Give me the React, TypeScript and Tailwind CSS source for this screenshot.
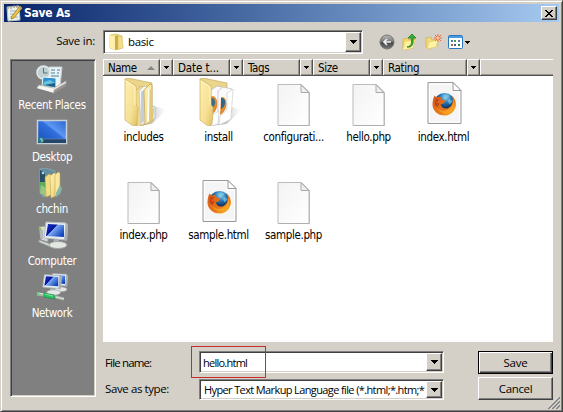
import React from 'react';

const UI = "font-['DejaVu_Sans_Condensed','DejaVu_Sans',sans-serif] [font-stretch:condensed]";
const OPEN = "font-['Open_Sans','Noto_Sans',sans-serif] [font-stretch:normal] text-[11.5px]";
const SUNKEN = 'border border-t-[#808080] border-l-[#808080] border-r-white border-b-white shadow-[inset_1px_1px_0_#404040,inset_-1px_-1px_0_#d4d0c8]';
const RAISED = 'bg-[#d4d0c8] border border-t-white border-l-white border-r-[#404040] border-b-[#404040] shadow-[inset_-1px_-1px_0_#808080]';

function Label({ children, className = '' }: { children: string; className?: string }) {
  return <span className={`whitespace-nowrap ${className}`}>{children}</span>;
}

function Arrow({ small = false }: { small?: boolean }) {
  return small ? (
    <svg width="5" height="3" viewBox="0 0 5 3" shapeRendering="crispEdges"><path d="M0 0h5v1H0zM1 1h3v1H1zM2 2h1v1H2z" /></svg>
  ) : (
    <svg width="7" height="4" viewBox="0 0 7 4" shapeRendering="crispEdges"><path d="M0 0h7v1H0zM1 1h5v1H1zM2 2h3v1H2zM3 3h1v1H3z" /></svg>
  );
}

function DropButton() {
  return <div className={`flex w-4 shrink-0 items-center justify-center ${RAISED}`}><Arrow /></div>;
}

function Defs() {
  return (
    <svg width="0" height="0" className="absolute">
      <defs>
        <linearGradient id="folder" x1="0" x2="1" y2="1"><stop stopColor="#fff0ae" /><stop offset=".6" stopColor="#f6e095" /><stop offset="1" stopColor="#dfc05e" /></linearGradient>
        <linearGradient id="paper" x1="0" y1="0" x2="1" y2="1"><stop stopColor="#f3f3f3" /><stop offset="1" stopColor="#fff" /></linearGradient>
        <linearGradient id="shade"><stop stopColor="#666" stopOpacity=".6" /><stop offset=".5" stopColor="#777" stopOpacity=".4" /><stop offset="1" stopColor="#999" stopOpacity="0" /></linearGradient>
        <linearGradient id="screen" x1="0" y1="0" x2="1" y2=".7"><stop stopColor="#1838b5" /><stop offset=".44" stopColor="#0712a1" /><stop offset=".46" stopColor="#7eacf0" /><stop offset="1" stopColor="#1245c0" /></linearGradient>
        <linearGradient id="desktop" x1="0" y1="1" x2="1" y2="0"><stop stopColor="#174cb0" /><stop offset=".55" stopColor="#3170de" /><stop offset=".6" stopColor="#5d98f2" /><stop offset="1" stopColor="#2d63d0" /></linearGradient>
        <radialGradient id="globe" cx=".55" cy=".2"><stop stopColor="#9bddf4" /><stop offset=".5" stopColor="#2b7dba" /><stop offset="1" stopColor="#123669" /></radialGradient>
        <linearGradient id="fox" x1="0" y1="0" x2="1" y2="1"><stop stopColor="#d45a1c" /><stop offset=".6" stopColor="#e87716" /><stop offset="1" stopColor="#ffc32f" /></linearGradient>
        <linearGradient id="ball" x2="0" y2="1"><stop stopColor="#bbb" /><stop offset=".48" stopColor="#777" /><stop offset=".52" stopColor="#444" /><stop offset="1" stopColor="#777" /></linearGradient>
      </defs>
    </svg>
  );
}

function FoxBall() {
  return (
    <g>
      <circle cx="12" cy="11" r="10.5" fill="url(#globe)" />
      <path d="M13 2l4 1-2 3-3-1zM17 6l3 3-3 3-2-4z" fill="#76c2e4" opacity=".75" />
      <path d="M2 3l2 2 4-1 1 3 4 1-2 3-3 1 2 3c3 2 6 1 8-1 3-3 3-8 1-11 4 3 6 9 3 14-2 4-6 6-10 6C5 23 0 18 0 12c0-4 1-7 2-9z" fill="url(#fox)" />
      <path d="M3 13c2 5 8 7 13 4 4-2 5-6 4-10 3 4 2 9-1 12-5 4-13 2-16-6z" fill="#f7ac27" opacity=".65" />
      <path d="M3 6l4 1-3 3 3 1-2 4-3-3z" fill="#bd3c17" opacity=".8" />
    </g>
  );
}

function PageIcon({ fox = false }: { fox?: boolean }) {
  return (
    <svg width="48" height="48" viewBox="0 0 48 48">
      {fox ? (
        <>
          <path d="M8 4.5h25l8 8v33H8z" fill="#f5f5f6" stroke="#999" />
          <path d="M9.5 6h22v8h8v30h-30z" fill="none" stroke="#fff" />
          <path d="M33 4.5v8h8z" fill="#fff" stroke="#999" />
          <g transform="translate(12.5 14.5)"><FoxBall /></g>
        </>
      ) : (
        <>
          <path d="M8 6.5h23l8 8v33H8z" fill="url(#paper)" stroke="#bbb" />
          <path d="M31 6.5v8h8z" fill="#eee" stroke="#aaa" />
          <path d="M31.5 7l8 8v32.5H9" fill="none" stroke="#aaa" opacity=".7" />
        </>
      )}
    </svg>
  );
}

function FolderIcon({ fox = false }: { fox?: boolean }) {
  return (
    <svg width="48" height="48" viewBox="0 0 48 48">
      <path d="M14 48l18-2 14-14-12-4z" fill="url(#shade)" />
      <path d="M5 1l3-1 24 5v24l-16 3z" fill="#ead58a" stroke="#b9a458" strokeWidth=".6" />
      {fox ? (
        <>
          <path d="M16 12l6-4 5 1-3 34-8 4z" fill="#fafafa" stroke="#b9b9b9" strokeWidth=".7" />
          <path d="M16 18c8-1 9 14 0 19z" fill="#e08a32" /><path d="M16 20c5-1 6 8 0 11z" fill="#3d6d88" />
          <path d="M23 13l5-4 9 2-3 32-11 4z" fill="#fafafa" stroke="#bbb" strokeWidth=".7" />
          <path d="M26 19c7-1 8 13-1 18z" fill="#e08a32" /><path d="M26 20c5-1 6 8 0 11z" fill="#2e668d" />
          <path d="M16 48l2-11 6-4-1 13zM24 47l1-9 7-6V15l6-4-2 30z" fill="#fff" stroke="#c7c7c7" strokeWidth=".6" />
        </>
      ) : (
        <>
          <path d="M15 13l6-5 2 1v20l2 2-1 16-7 2z" fill="#efda8e" stroke="#c2a85a" strokeWidth=".7" />
          <path d="M19 13l5-5 3 1v35l-6 3z" fill="#f3f5f6" stroke="#bbb" strokeWidth=".6" />
          <path d="M21 14l3-2v32l-3 1z" fill="#c4ced6" />
          <path d="M24 12l6-6 2 1v22l2 2-1 12-8 4z" fill="url(#folder)" stroke="#b99e4f" strokeWidth=".7" />
          <path d="M28 11l1-1v33l-2 1z" fill="#fcfcf6" />
          <path d="M31 31l2-3 2 1v11l-4 3z" fill="#edf3f6" stroke="#a4b2b8" strokeWidth=".7" />
          <path d="M30 12h2v17l2 2-1 11-4 2z" fill="#e2c979" />
        </>
      )}
      <path d="M5 1l11 7v19l2 2-1 17-4 2-8-6z" fill="url(#folder)" stroke="#d3b969" strokeWidth=".8" />
      <path d="M6 3l9 6v18" fill="none" stroke="#fff7cb" />
    </svg>
  );
}

function FileItem({ name, kind }: { name: string; kind: string }) {
  return (
    <div className="flex h-[98px] w-[75px] flex-col items-center">
      {kind.startsWith('folder') ? <FolderIcon fox={kind === 'folder-fox'} /> : <PageIcon fox={kind === 'fox'} />}
      <Label className="mt-[3px] leading-4">{name}</Label>
    </div>
  );
}

function Monitor() {
  return (
    <>
      <path d="M7 1l20 1v17L5 17z" fill="#e8edf0" stroke="#b4bdc1" />
      <path d="M9 3l16 1v12L7 15z" fill="url(#screen)" />
      <path d="M27 2l3 2-2 16-3-1z" fill="#a8b0b5" />
      <path d="M15 18l5 1v4h-6z" fill="#a9b0b2" />
      <ellipse cx="19" cy="24" rx="9" ry="3.5" fill="#e5e7e3" stroke="#9fa6a8" />
    </>
  );
}

function PlaceIcon({ kind }: { kind: string }) {
  return (
    <svg width="32" height="32" viewBox="0 0 32 32">
      {kind === 'recent' && <>
        <path d="M13 3h13l-2 20H12z" fill="#edf3f5" stroke="#c2ced1" />
        <path d="M15 6h4m2 0h3m-9 3h4m2 0h2m-8 3h8" stroke="#79a5ba" strokeWidth="1.5" />
        <circle cx="7.5" cy="8.5" r="6.5" fill="#bfd0d3" stroke="#e2eaea" strokeWidth="1.5" />
        <path d="M7.5 4v5h4" stroke="#5c7176" fill="none" />
        <path d="M7 13l13 1v10L6 22z" fill="#2e8fd0" stroke="#ecf6f7" /><path d="M8 18l6-2 5 3v4l-12-1z" fill="#66c3dd" /><path d="M8 21l11-2v4z" fill="#235c83" />
        <path d="M1 24l16 4 13-8v-3l-12 7L3 21z" fill="#e6e6e2" stroke="#b3b1ac" strokeWidth=".7" /><path d="M1 24l2-2 15 3v4z" fill="#f7f7f1" /><path d="M18 26l12-7v3l-13 8z" fill="#9c938e" />
      </>}
      {kind === 'desktop' && <>
        <path d="M1.5 4.5h29v23h-29z" fill="url(#desktop)" stroke="#c5d0d8" strokeWidth="1.5" />
        <path d="M2 23h28v4H2z" fill="#244569" /><path d="M2 23h28" stroke="#6c8fb9" strokeWidth=".6" /><circle cx="5" cy="24" r="3" fill="#257d91" /><path d="M4 23h2v3" stroke="#b9e5b1" fill="none" />
      </>}
      {kind === 'user' && <>
        <path d="M4 1l6-1 9 3v24l-12 2-3-4z" fill="#668d9d" stroke="#91aeb6" strokeWidth=".7" /><path d="M4 2l5 3v20l-5-4z" fill="#284f67" /><path d="M4 14h6v13l-6-4z" fill="#5bae5e" />
        <path d="M9 9l4-3 2 1v20l-5 2z" fill="#f3dc81" stroke="#b29543" strokeWidth=".5" /><path d="M14 8l4-3 2 1v22l-5 2z" fill="url(#folder)" stroke="#c5a95a" strokeWidth=".5" /><path d="M19 7l3-3 2 1v20l-5 3z" fill="#f8e79f" stroke="#b99f4a" strokeWidth=".5" /><path d="M5 17l5 3v9l-6-4z" fill="#9bc581" /><path d="M24 17l2 4-2 5-4 3v-4z" fill="#85b6a9" /><circle cx="7" cy="5" r="1.3" fill="#add7e4" />
      </>}
      {kind === 'computer' && <>
        <path d="M3 7l5-1 4 2v14l-7-2z" fill="#d6dadb" stroke="#92999b" /><path d="M4 9l3 1v9l-3-1z" fill="#b0b8b9" /><circle cx="4" cy="9" r="1.3" fill="#9cba3e" />
        <path d="M3 20l17 6-3 2-14-6z" fill="#d8ddda" stroke="#979d9c" strokeWidth=".7" /><g transform="translate(3 1)"><Monitor /></g>
      </>}
      {kind === 'network' && <>
        <g transform="translate(12 1) scale(.68)"><Monitor /></g><g transform="translate(3 2) scale(.77)"><Monitor /></g>
        <path d="M1 22l7 1 5 1 7 1 8 2" stroke="#a8b2aa" strokeWidth="3" fill="none" /><path d="M1 21l7 1m12 3l8 2" stroke="#e0eae0" fill="none" /><path d="M8 21l10 2 1 4-11-2z" fill="#28c75b" stroke="#158c4d" strokeWidth=".7" /><path d="M9 22l8 2" stroke="#7ae6a0" /><circle cx="2" cy="22" r="1.3" fill="#54dc6a" />
      </>}
    </svg>
  );
}

function HeaderCell({ name, wide = false, sorted = false, tracking = '' }: { name: string; wide?: boolean; sorted?: boolean; tracking?: string }) {
  return (
    <div className={`flex h-[17px] shrink-0 ${wide ? 'w-[97px]' : 'w-[70px]'}`}>
      <div className="flex flex-1 items-center border-y border-r border-t-white border-r-[#505050] border-b-[#505050] pt-px pl-[5px] shadow-[inset_1px_0_0_white,inset_-1px_-1px_0_#99958f]">
        <Label className={`leading-[15px] ${tracking}`}>{name}</Label>
        {sorted && <svg className="ml-[10px]" width="8" height="4"><path d="M4 0l4 4H0z" fill="#858585" /></svg>}
      </div>
      <div className="flex w-[13px] items-center justify-center border border-t-white border-r-[#505050] border-b-[#505050] border-l-white shadow-[inset_-1px_-1px_0_#99958f]"><Arrow small /></div>
    </div>
  );
}

const files = [
  ['includes', 'folder'], ['install', 'folder-fox'], ['configurati...', 'page'], ['hello.php', 'page'], ['index.html', 'fox'],
  ['index.php', 'page'], ['sample.html', 'fox'], ['sample.php', 'page'],
];
const places = [['Recent Places', 'recent'], ['Desktop', 'desktop'], ['chchin', 'user'], ['Computer', 'computer'], ['Network', 'network']];

function Toolbar() {
  return (
    <div className="flex items-center pl-[15px]">
      <svg width="18" height="18" viewBox="0 0 18 18"><circle cx="9" cy="9" r="7" fill="url(#ball)" stroke="#777" /><path d="M13 9H6m3-3L6 9l3 3" fill="none" stroke="#eee" strokeWidth="1.7" /></svg>
      <svg className="ml-[5px]" width="18" height="18" viewBox="0 0 18 18"><path d="M2 6l5-1 1 2 6-1-2 9-10 2z" fill="#f1da67" stroke="#cfac3d" strokeWidth=".7" /><path d="M4 9l10-2-2 8-10 2z" fill="#fff09d" /><path d="M6 14c5-1 5-5 4-9H7l4-4 4 4h-3c1 6-1 10-6 9z" fill="#39af38" stroke="#14791c" strokeWidth=".7" /></svg>
      <svg className="ml-[5px]" width="18" height="18" viewBox="0 0 18 18"><path d="M2 5l5-1 1 3 5-1v7l-9 3-2-2z" fill="#f0d87c" stroke="#d2b04c" strokeWidth=".7" /><path d="M5 9l9-2-2 7-9 2z" fill="#fff2a3" stroke="#e3cb71" strokeWidth=".6" /><path d="M14 1v8M10 5h8M11 2l6 6m0-6l-6 6" stroke="#ef6442" /><circle cx="14" cy="5" r="1.5" fill="#ffc092" /></svg>
      <svg className="ml-[6px]" width="15" height="15" viewBox="0 0 15 15"><rect x=".5" y=".5" width="14" height="13" rx="1" fill="#fff" stroke="#2876bd" /><path d="M1 1h13v2H1z" fill="#4a9ade" /><path d="M3 5h2v2H3zm7 0h2v2h-2z" fill="#5375a9" /><path d="M6 5h2v2H6z" fill="#57944d" /><path d="M3 9h2v2H3z" fill="#b65c45" /><path d="M6 9h2v2H6z" fill="#315eac" /><path d="M10 9h2v2h-2z" fill="#2b7d3a" /></svg>
      <span className="ml-[2px] flex"><Arrow small /></span>
    </div>
  );
}

export default function App() {
  return (
    <main className={`relative flex h-[412px] w-[563px] flex-col overflow-hidden border border-t-[#d4d0c8] border-l-[#d4d0c8] border-r-[#404040] border-b-[#404040] bg-[#d4d0c8] p-[3px] text-[11.5px] tracking-[-0.35px] text-black shadow-[inset_1px_1px_0_white,inset_-1px_-1px_0_#808080] ${UI}`}>
      <Defs />
      <header className="flex h-[18px] shrink-0 items-center bg-gradient-to-r from-[#0a246a] to-[#a6caf0] pl-[2px] text-white">
        <svg width="17" height="17" viewBox="0 0 17 17"><path d="M1 2l12-1 1 14-12 1z" fill="#eef3e9" stroke="#b8c4be" /><path d="M2 1v3m3-3v3m3-4v3m3-3v3" stroke="#8b8772" /><path d="M4 6h7M4 9h6m-6 3h8" stroke="#9daec1" /><path d="M14 1l2 2-8 10-3 1 1-3z" fill="#efc63c" stroke="#82722e" strokeWidth=".7" /><path d="M14 1l2 2-1 2-3-2z" fill="#cc9b5c" /></svg>
        <Label className="ml-px text-[12px] font-bold tracking-[-0.25px]">Save As</Label>
        <div className={`mr-[2px] ml-auto flex h-[14px] w-4 items-center justify-center ${RAISED}`}><svg width="8" height="7" viewBox="0 0 8 7" shapeRendering="crispEdges"><path d="M0 0h2v1h1v1h2V1h1V0h2v1H7v1H6v1H5v1h1v1h1v1h1v1H6V6H5V5H3v1H2v1H0V6h1V5h1V4h1V3H2V2H1V1H0z" fill="#000" /></svg></div>
      </header>

      <div className="flex h-[37px] shrink-0 pt-[8px] pb-[5px]">
        <Label className={`w-[99px] pt-[3px] pr-[8px] text-right leading-4 tracking-[-0.25px] ${OPEN}`}>Save in:</Label>
        <div className={`flex h-6 w-[260px] shrink-0 bg-white p-px ${SUNKEN}`}>
          <div className="flex flex-1 items-center pl-[3px]">
            <svg width="17" height="18" viewBox="0 0 17 18"><path d="M2 2l6-1 6 2v12l-6 2-6-2z" fill="#f2df8e" stroke="#d3bd66" strokeWidth=".7" /><path d="M2 2l5 2v13l-5-2z" fill="#ffefaa" /><path d="M7 3l3-1v14l-3 1z" fill="#c9ac4e" /><path d="M10 3l4 1v6l1 1v4l-5 1z" fill="#f4df88" stroke="#d8be60" strokeWidth=".6" /></svg>
            <Label className={`ml-[3px] tracking-[-0.35px] ${OPEN}`}>basic</Label>
          </div>
          <DropButton />
        </div>
        <Toolbar />
      </div>

      <div className="flex min-h-0 flex-1">
        <aside className={`ml-[6px] flex h-[338px] w-[86px] shrink-0 flex-col items-center bg-[#808080] pt-[4px] pr-[2px] text-white ${SUNKEN}`}>
          {places.map(([name, kind]) => (
            <div className="flex h-[52px] shrink-0 flex-col items-center" key={name}>
              <PlaceIcon kind={kind} />
              <Label className="mt-px h-4 leading-4">{name}</Label>
            </div>
          ))}
        </aside>

        <section className="ml-[7px] flex w-[450px] flex-col">
          <div className="flex h-[17px] shrink-0">
            <HeaderCell name="Name" sorted tracking="tracking-[-0.5px]" /><HeaderCell name="Date t..." tracking="tracking-[-0.1px]" /><HeaderCell name="Tags" /><HeaderCell name="Size" /><HeaderCell name="Rating" wide />
            <div className="flex-1 border-y border-t-white border-b-[#505050] shadow-[inset_1px_0_0_white,inset_0_-1px_0_#99958f]" />
          </div>
          <div className="flex h-[266px] shrink-0 flex-wrap content-start bg-white pt-[2px] pl-[3px]">
            {files.map(([name, kind]) => <FileItem key={name} name={name} kind={kind} />)}
          </div>
          <div className="mt-[9px] flex justify-between">
            <div className={`flex flex-col ${OPEN}`}>
              <div className="flex h-[28px]"><Label className="w-[96px] pt-[4px] pl-[2px] leading-4 tracking-[-0.85px]">File name:</Label>
                <div className={`flex h-[22px] w-[245px] bg-white p-px ${SUNKEN}`}><Label className="flex-1 pl-[2px] text-[11px] leading-[19px] tracking-[-0.75px]">hello.html</Label><DropButton /></div>
              </div>
              <div className="flex h-[22px]"><Label className="w-[96px] pt-[2px] pl-[2px] leading-4 tracking-[-0.4px]">Save as type:</Label>
                <div className={`flex h-[21px] w-[245px] bg-white p-px ${SUNKEN}`}><Label className="min-w-0 flex-1 pl-[3px] text-[11px] leading-[18px] tracking-[-0.62px]">Hyper Text Markup Language file (*.html;*.htm;*</Label><DropButton /></div>
              </div>
            </div>
            <div className={`flex w-[75px] flex-col gap-[3px] ${OPEN}`}>
              <button className="flex h-[23px] items-center justify-center border border-black bg-[#d4d0c8] tracking-[-0.2px] shadow-[inset_1px_1px_0_white,inset_-1px_-1px_0_#404040,inset_-2px_-2px_0_#808080]">Save</button>
              <button className={`flex h-[23px] items-center justify-center tracking-[-0.35px] ${RAISED}`}>Cancel</button>
            </div>
          </div>
        </section>
      </div>
      <div className="pointer-events-none absolute top-[345px] left-[190px] h-[32px] w-[75px] border border-[#c82b2b]" />
      <svg className="absolute right-[2px] bottom-[2px]" width="12" height="12"><path d="M0 12L12 0M4 12l8-8M8 12l4-4" stroke="#808080" strokeWidth="1.8" /><path d="M-1.5 12L12-1.5M2.5 12L12 2.5M6.5 12L12 6.5" stroke="#fff" strokeWidth=".8" /></svg>
    </main>
  );
}
